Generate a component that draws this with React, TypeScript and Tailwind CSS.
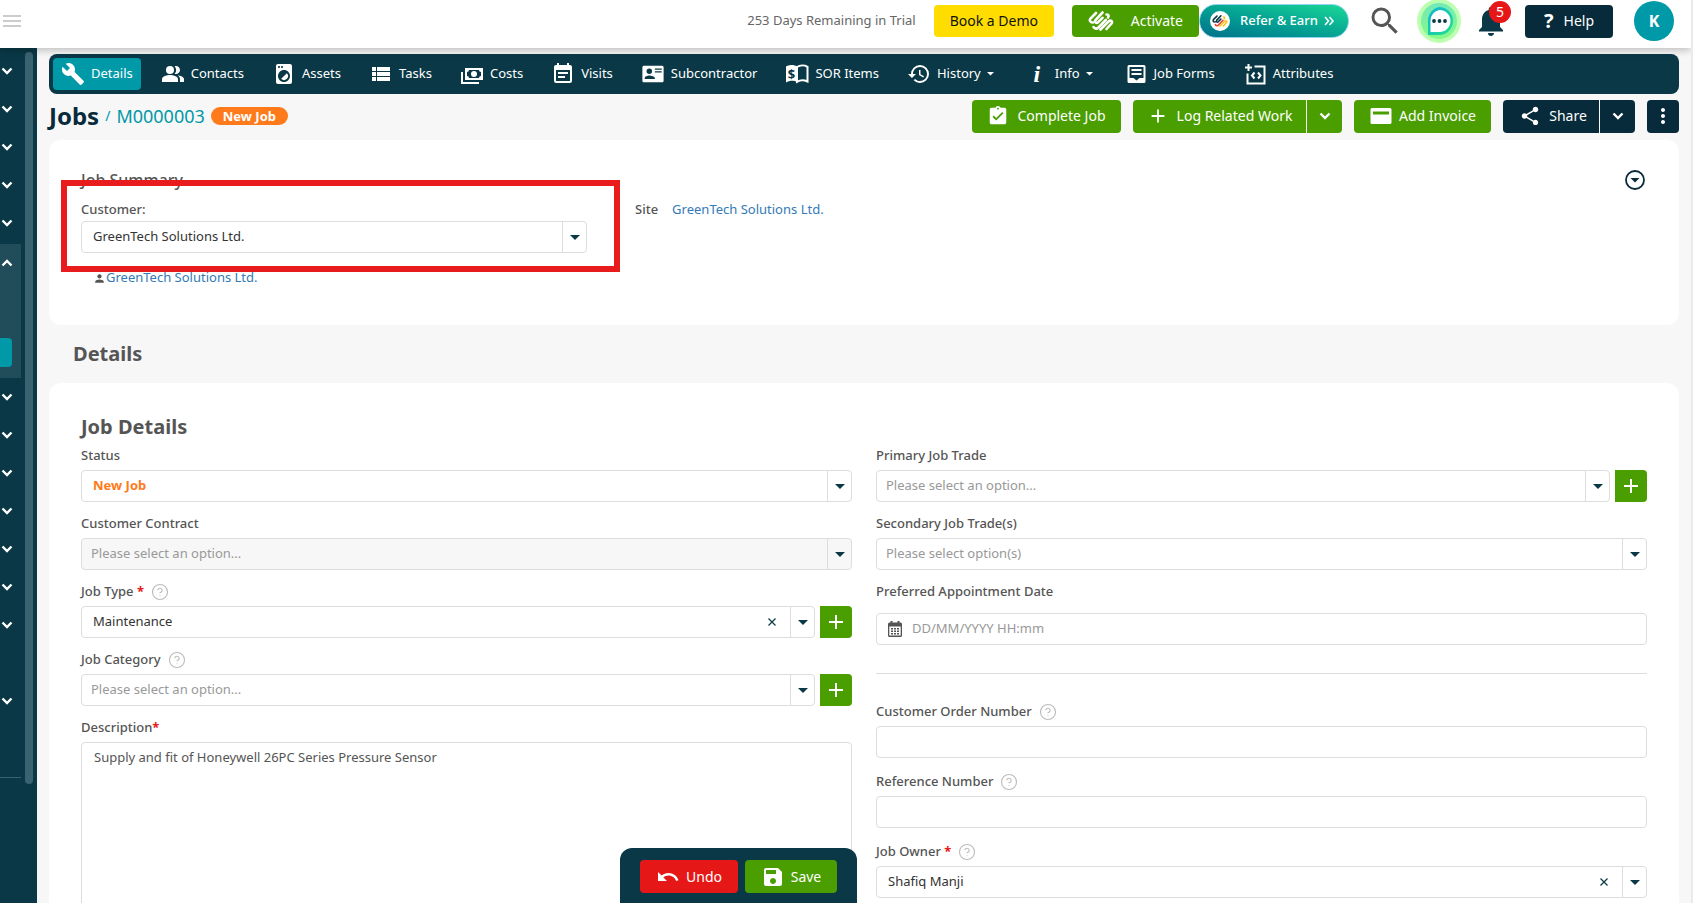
import { useState } from 'react';
import {
  MdAdd,
  MdAssignmentTurnedIn,
  MdBuild,
  MdEventNote,
  MdHistory,
  MdLocalLaundryService,
  MdMoreVert,
  MdNotifications,
  MdPeopleAlt,
  MdPerson,
  MdSave,
  MdSearch,
  MdShare,
  MdUndo,
  MdViewList,
} from 'react-icons/md';
import { FiHelpCircle } from 'react-icons/fi';

// ===========================================
// Icons
// ===========================================

const CashIcon = () => (
  <svg viewBox="0 0 24 24" className="h-6 w-6" fill="currentColor">
    <path d="M5,6H23V18H5V6M14,9A3,3 0 0,1 17,12A3,3 0 0,1 14,15A3,3 0 0,1 11,12A3,3 0 0,1 14,9M9,8A2,2 0 0,1 7,10V14A2,2 0 0,1 9,16H19A2,2 0 0,1 21,14V10A2,2 0 0,1 19,8H9M1,10H3V20H19V22H1V10Z" />
  </svg>
);

const IdCardIcon = () => (
  <svg viewBox="-1 0 26 24" className="h-6 w-6" fill="currentColor">
    <path d="M3,3H22C23,3 23.5,4 23.5,5V19C23.5,20 23,21 22,21H2C1,21 .5,20 .5,19V5C.5,4 1,3 2,3M14,6V7.3H21.5V6H14M14,9V10.3H21.5V9H14M8,13.5C6,13.5 3,14.5 3,16.5V17.5H14V16.5C14,14.5 10,13.5 8,13.5M8,6A3,3 0 0,0 5,9A3,3 0 0,0 8,12A3,3 0 0,0 11,9A3,3 0 0,0 8,6Z" fillRule="evenodd" />
  </svg>
);

const PriceBookIcon = () => (
  <svg viewBox="0 0 24 24" className="h-6 w-6">
    <path d="M1 4.5C4.500 2.500 9 2.500 12 4.500V20C9 18.300 4.500 18.300 1 20.500Z" fill="currentColor" />
    <path d="M12 5C15 3 19.500 3 22.500 4.800V19.500C19.500 18 15 18 12 19.800Z" fill="none" stroke="currentColor" strokeWidth="2" />
    <text x="6.500" y="16.500" textAnchor="middle" fontSize="13" fontWeight="700" fill="#0a3846">$</text>
  </svg>
);

const InfoIcon = () => (
  <span className="w-6 text-center font-['Liberation_Serif',serif] text-2xl leading-6 font-bold italic">i</span>
);

const FormIcon = () => (
  <svg viewBox="0 0 24 24" className="h-6 w-6">
    <path d="M5 3H20A1.500 1.500 0 0 1 21.500 4.500V19.500A1.500 1.500 0 0 1 20 21H5A1.500 1.500 0 0 1 3.500 19.500V4.500A1.500 1.500 0 0 1 5 3ZM5.500 5V16H9.500L12.500 18.500 15.500 16H19.500V5Z" fill="currentColor" fillRule="evenodd" />
    <path d="M7.500 8H17.500M7.500 12H17.500" stroke="currentColor" strokeWidth="2" />
  </svg>
);

const AttributeIcon = () => (
  <svg viewBox="0 0 24 24" className="h-6 w-6" fill="none" stroke="currentColor" strokeWidth="2">
    <path d="M5.500 2V9M2 5.500H9M11.500 4.500H21.500V21.500H4.500V11.500" />
    <path d="M11.500 10.500 9 13.500 11.500 16.500M15 10.500 17.500 13.500 15 16.500" />
  </svg>
);

const ChevronIcon = ({ up = false, className = 'w-3' }: { up?: boolean; className?: string }) => (
  <svg viewBox="0 0 12 8" className={className} fill="none" stroke="currentColor" strokeWidth="2.400">
    <path d={up ? 'M1.500 6.500 6 2 10.500 6.500' : 'M1.500 1.500 6 6 10.500 1.500'} />
  </svg>
);

const CaretIcon = ({ className = 'w-2.5' }: { className?: string }) => (
  <svg viewBox="0 0 10 5" className={className} fill="currentColor">
    <path d="M0 0H10L5 5Z" />
  </svg>
);

const LogoMark = ({ className, colors }: { className: string; colors: string[] }) => (
  <svg viewBox="0 0 26 20" className={className} fill="none" strokeWidth="2.600" strokeLinecap="round">
    <path d="M8 2 2.500 7.500C1 9.500 2.500 11.800 5 11.500" stroke={colors[0]} />
    <path d="M14.500 1.500 7.500 9C6 11 8.500 13 10.200 11.200L14.500 6.800" stroke={colors[0]} />
    <path d="M5.500 16C7 18.200 9 18 10.500 16.500L17.800 8.800" stroke={colors[1]} />
    <path d="M18.500 3.500C20.500 3.200 21.200 5 20 6.500" stroke={colors[2]} />
    <path d="M12.500 18.500 20.500 10.500C22.500 8.600 25 10 23.500 12.500L18.500 18" stroke={colors[2]} />
  </svg>
);

const ChatIcon = () => (
  <svg viewBox="0 0 44 44" className="h-11 w-11">
    <defs>
      <linearGradient id="chatRing" x1="0" y1="0" x2="1" y2="1">
        <stop offset="0" stopColor="#12b4d8" />
        <stop offset="1" stopColor="#1fe08a" />
      </linearGradient>
      <linearGradient id="chatHalo" x1="0" y1="0" x2="0" y2="1">
        <stop offset="0" stopColor="#74e8b8" />
        <stop offset="1" stopColor="#86fb86" />
      </linearGradient>
    </defs>
    <circle cx="22" cy="22" r="22" fill="#bdffb0" />
    <circle cx="22" cy="22" r="18" fill="url(#chatHalo)" />
    <path d="M22 8A14 14 0 1 1 22 36H11V22A14 14 0 0 1 22 8Z" fill="url(#chatRing)" />
    <path d="M22.500 11A11 11 0 1 1 22.500 33H13.500V22A11 11 0 0 1 22.500 11Z" fill="#fff" />
    <g fill="#0a3846">
      <circle cx="17" cy="22" r="1.900" />
      <circle cx="22.500" cy="22" r="1.900" />
      <circle cx="28" cy="22" r="1.900" />
    </g>
  </svg>
);

// ===========================================
// Header
// ===========================================

const Header = () => (
  <header className="relative z-20 flex h-12 shrink-0 items-center bg-white pr-[17px] pb-1.5 pl-[3px] shadow-[0_2px_8px_rgba(0,0,0,0.25)]">
    <button aria-label="Toggle menu" className="flex w-[18px] flex-col gap-[3px]">
      <span className="h-0.5 bg-[#ccc]" />
      <span className="h-0.5 bg-[#ccc]" />
      <span className="h-0.5 bg-[#ccc]" />
    </button>
    <span className="ml-auto text-[13px] text-[#666]">253 Days Remaining in Trial</span>
    <button className="ml-[18px] h-8 rounded bg-[#ffdd00] px-4 text-sm text-[#111]">Book a Demo</button>
    <button className="ml-[18px] flex h-8 w-[127px] items-center justify-between rounded bg-[#4a9e00] px-4 text-sm text-white">
      <LogoMark className="h-5 w-[26px]" colors={['#fff', '#fff', '#fff']} />
      Activate
    </button>
    <button className="flex h-[34px] w-[150px] items-center rounded-full border border-[#8fd3ee] bg-linear-to-tr from-[#03708a] to-[#1bd996] pl-2.5 text-[13px] font-medium text-white">
      <span className="mr-2.5 flex h-5 w-5 items-center justify-center rounded-full bg-white">
        <LogoMark className="h-3.5 w-4" colors={['#0a3846', '#e8403c', '#fcc419']} />
      </span>
      Refer &amp; Earn
      <svg viewBox="0 0 10 10" className="ml-1.5 w-2.5" fill="none" stroke="currentColor" strokeWidth="1.600">
        <path d="M1 1 4.500 5 1 9M5.500 1 9 5 5.500 9" />
      </svg>
    </button>
    <button aria-label="Search" className="ml-[18px] text-[#555]">
      <MdSearch className="h-9 w-9" />
    </button>
    <button aria-label="Chat" className="ml-3.5">
      <ChatIcon />
    </button>
    <button aria-label="Notifications" className="relative ml-3 text-[#0a3846]">
      <MdNotifications className="h-9 w-9" />
      <span className="absolute -top-0.5 -right-0.5 flex h-[22px] w-[22px] items-center justify-center rounded-full bg-[#e61717] text-sm text-white">
        5
      </span>
    </button>
    <button className="ml-4 flex h-[33px] w-[88px] items-center justify-center gap-2.5 rounded bg-[#072b3a] text-sm text-white">
      <span className="text-xl font-bold">?</span>
      Help
    </button>
    <button className="ml-[21px] h-10 w-10 rounded-full bg-[#0099a8] text-base font-bold text-white">K</button>
  </header>
);

// ===========================================
// Sidebar
// ===========================================

const SidebarRow = ({ up, blank }: { up?: boolean; blank?: boolean }) => (
  <button aria-label="Toggle section" className="flex h-[38px] w-full items-center pl-px">
    {!blank && <ChevronIcon up={up} />}
  </button>
);

const Sidebar = () => (
  <aside className="flex w-[37px] shrink-0 bg-[#0a3846] pt-1 text-white">
    <div className="w-[21px]">
      {[0, 1, 2, 3, 4].map((i) => (
        <SidebarRow key={i} />
      ))}
      <div className="mt-0.5 h-[134px] bg-[#214d5b]">
        <SidebarRow up />
        <div className="mt-14 h-[29px] w-3 rounded-r bg-[#0099a8]" />
      </div>
      {[0, 1, 2, 3, 4, 5, 6, 7, 8].map((i) => (
        <SidebarRow key={i} blank={i === 7} />
      ))}
      <div className="mt-[57px] border-t border-[#3a6371]" />
    </div>
    <div className="ml-1 h-[732px] w-2 rounded-full bg-[#3a6371]" />
  </aside>
);

// ===========================================
// Tabs
// ===========================================

const tabs = [
  { label: 'Details', icon: <MdBuild className="h-6 w-6" />, active: true },
  { label: 'Contacts', icon: <MdPeopleAlt className="h-6 w-6" /> },
  { label: 'Assets', icon: <MdLocalLaundryService className="h-6 w-6" /> },
  { label: 'Tasks', icon: <MdViewList className="h-6 w-6" /> },
  { label: 'Costs', icon: <CashIcon /> },
  { label: 'Visits', icon: <MdEventNote className="h-6 w-6" /> },
  { label: 'Subcontractor', icon: <IdCardIcon /> },
  { label: 'SOR Items', icon: <PriceBookIcon /> },
  { label: 'History', icon: <MdHistory className="h-6 w-6" />, menu: true },
  { label: 'Info', icon: <InfoIcon />, menu: true },
  { label: 'Job Forms', icon: <FormIcon /> },
  { label: 'Attributes', icon: <AttributeIcon /> },
];

const TabBar = () => (
  <nav className="flex h-10 items-center gap-3 rounded-lg bg-[#0a3846] px-1">
    {tabs.map((tab) => (
      <a
        key={tab.label}
        href="#"
        className={`flex h-8 items-center gap-1.5 rounded px-2 text-[13px] whitespace-nowrap text-white ${
          tab.active ? 'bg-[#0099a8]' : ''
        }`}
      >
        {tab.icon}
        {tab.label}
        {tab.menu && <CaretIcon className="mr-[3px] w-[7px]" />}
      </a>
    ))}
  </nav>
);

// ===========================================
// Title Row
// ===========================================

const TitleRow = () => (
  <div className="flex h-[46px] items-center pb-0.5">
    <h1 className="text-2xl font-bold text-[#072b3a]">Jobs</h1>
    <span className="ml-1.5 text-sm text-[#0099a8]">/</span>
    <a href="#" className="ml-1.5 text-lg text-[#0099a8]">M0000003</a>
    <span className="ml-1.5 rounded-full bg-[#ff7a1a] px-3 text-[13px] leading-[18px] font-bold text-white">New Job</span>
    <div className="ml-auto flex h-[33px] gap-3 text-sm text-white">
      <button className="flex w-[149px] items-center justify-center gap-2 rounded bg-[#4a9e00]">
        <MdAssignmentTurnedIn className="h-[22px] w-[22px]" />
        Complete Job
      </button>
      <div className="flex">
        <button className="flex w-[173px] items-center justify-center gap-2 rounded-l bg-[#4a9e00]">
          <MdAdd className="h-[22px] w-[22px]" />
          Log Related Work
        </button>
        <button aria-label="More related work" className="ml-px flex w-[35px] items-center justify-center rounded-r bg-[#4a9e00]">
          <ChevronIcon />
        </button>
      </div>
      <button className="flex w-[137px] items-center justify-center gap-1.5 rounded bg-[#4a9e00]">
        <svg viewBox="0 0 24 24" className="h-6 w-6" fill="currentColor">
          <path d="M3 4H21Q22.500 4 22.500 5.500V18.500Q22.500 20 21 20H3Q1.500 20 1.500 18.500V5.500Q1.500 4 3 4ZM4 7.500V10.500H20V7.500Z" fillRule="evenodd" />
        </svg>
        Add Invoice
      </button>
      <div className="flex">
        <button className="flex w-24 items-center justify-center gap-2 rounded-l bg-[#072b3a] pl-1">
          <MdShare className="h-[22px] w-[22px]" />
          Share
        </button>
        <button aria-label="More share options" className="ml-px flex w-[35px] items-center justify-center rounded-r bg-[#072b3a]">
          <ChevronIcon />
        </button>
      </div>
      <button aria-label="More actions" className="flex w-8 items-center justify-center rounded bg-[#072b3a]">
        <MdMoreVert className="h-6 w-6" />
      </button>
    </div>
  </div>
);

// ===========================================
// Form Fields
// ===========================================

interface LabelProps {
  htmlFor: string;
  text: string;
  required?: boolean;
  help?: boolean;
}

const FieldLabel = ({ htmlFor, text, required, help }: LabelProps) => (
  <div className="flex h-7 items-center text-[13px] font-medium text-[#555]">
    <label htmlFor={htmlFor}>
      {text}
      {required && <span className="font-bold text-[#e61717]">{text === 'Description' ? '*' : ' *'}</span>}
    </label>
    {help && <FiHelpCircle className="ml-[7px] h-[18px] w-[18px] stroke-[1.5] text-[#bbb]" />}
  </div>
);

interface SelectBoxProps {
  id: string;
  value: string;
  tone?: 'value' | 'placeholder' | 'status';
  disabled?: boolean;
  clearable?: boolean;
  addable?: boolean;
}

const toneClasses = {
  value: 'pl-[11px] text-[#333]',
  placeholder: 'pl-[9px] text-[#999]',
  status: 'pl-[11px] font-bold text-[#ff7a1a]',
};

const SelectBox = ({ id, value, tone = 'value', disabled, clearable, addable }: SelectBoxProps) => (
  <div className="flex h-8 gap-[5px]">
    <div className={`flex flex-1 items-stretch rounded border border-[#ddd] text-[#0a3846] ${disabled ? 'bg-[#f7f7f7]' : 'bg-white'}`}>
      <select id={id} disabled={disabled} className={`min-w-0 flex-1 appearance-none text-[13px] opacity-100 outline-none ${toneClasses[tone]}`}>
        <option>{value}</option>
      </select>
      {clearable && (
        <button aria-label="Clear" className="flex w-9 items-center justify-center">
          <svg viewBox="0 0 8 8" className="w-2" stroke="currentColor" strokeWidth="1.200">
            <path d="M.5 .5 7.500 7.500M7.500 .5 .5 7.500" />
          </svg>
        </button>
      )}
      <span className="flex w-6 items-center justify-center border-l border-[#ddd]">
        <CaretIcon />
      </span>
    </div>
    {addable && (
      <button aria-label="Add option" className="flex w-8 items-center justify-center rounded-r bg-[#4a9e00] text-white">
        <MdAdd className="h-6 w-6" />
      </button>
    )}
  </div>
);

const TextBox = ({ id }: { id: string }) => (
  <input id={id} type="text" className="block h-8 w-full rounded-sm border border-[#ddd] px-3 text-[13px] text-[#333] outline-none" />
);

// ===========================================
// Job Summary
// ===========================================

const JobSummary = () => (
  <section className="relative rounded-xl bg-white px-8 pt-7 pb-[37px]">
    <div className="flex h-6 items-center justify-between">
      <h2 className="text-base font-medium text-[#555]">Job Summary</h2>
      <button aria-label="Collapse summary" className="mr-0.5 text-[#072b3a]">
        <svg viewBox="0 0 20 20" className="h-5 w-5">
          <circle cx="10" cy="10" r="9" fill="none" stroke="currentColor" strokeWidth="1.800" />
          <path d="M5.500 8H14.500L10 12.500Z" fill="currentColor" />
        </svg>
      </button>
    </div>
    <div className="mt-[7px] flex gap-12 text-[13px]">
      <div className="w-[506px]">
        <div className="flex h-[22px] items-center font-medium text-[#555]">
          <label htmlFor="customer">Customer:</label>
        </div>
        <SelectBox id="customer" value="GreenTech Solutions Ltd." />
        <div className="mt-[15px] flex h-5 items-center pl-3">
          <MdPerson className="h-[13px] w-[13px] text-[#555]" />
          <a href="#" className="text-[#337ab7]">GreenTech Solutions Ltd.</a>
        </div>
      </div>
      <div className="flex h-[22px] items-center gap-3.5">
        <span className="font-medium text-[#555]">Site</span>
        <a href="#" className="text-[#337ab7]">GreenTech Solutions Ltd.</a>
      </div>
    </div>
    {/* Highlight around the customer field */}
    <div className="pointer-events-none absolute top-10 left-3 h-[92px] w-[559px] border-6 border-[#e81c1c]" />
  </section>
);

// ===========================================
// Job Details
// ===========================================

const JobDetails = () => {
  const [description, setDescription] = useState('Supply and fit of Honeywell 26PC Series Pressure Sensor');

  return (
    <section className="rounded-t-xl bg-white px-8 pt-[30px] pb-8">
      <h3 className="mb-px text-xl leading-7 font-bold text-[#555]">Job Details</h3>
      <div className="grid grid-cols-2 gap-6">
        <div className="flex flex-col gap-2">
          <div>
            <FieldLabel htmlFor="status" text="Status" />
            <SelectBox id="status" value="New Job" tone="status" />
          </div>
          <div>
            <FieldLabel htmlFor="contract" text="Customer Contract" />
            <SelectBox id="contract" value="Please select an option..." tone="placeholder" disabled />
          </div>
          <div>
            <FieldLabel htmlFor="type" text="Job Type" required help />
            <SelectBox id="type" value="Maintenance" clearable addable />
          </div>
          <div>
            <FieldLabel htmlFor="category" text="Job Category" help />
            <SelectBox id="category" value="Please select an option..." tone="placeholder" addable />
          </div>
          <div>
            <FieldLabel htmlFor="description" text="Description" required />
            <textarea
              id="description"
              value={description}
              onChange={(e) => setDescription(e.target.value)}
              className="block h-60 w-full resize-none rounded-sm border border-[#ddd] px-3 py-1 text-[13px] leading-5 text-[#555] outline-none"
            />
          </div>
        </div>

        <div className="flex flex-col gap-2">
          <div>
            <FieldLabel htmlFor="primary" text="Primary Job Trade" />
            <SelectBox id="primary" value="Please select an option..." tone="placeholder" addable />
          </div>
          <div>
            <FieldLabel htmlFor="secondary" text="Secondary Job Trade(s)" />
            <SelectBox id="secondary" value="Please select option(s)" tone="placeholder" />
          </div>
          <div className="border-b border-[#ddd] pb-7">
            <FieldLabel htmlFor="appointment" text="Preferred Appointment Date" />
            <div className="mt-[7px] flex h-8 items-center gap-2.5 rounded border border-[#ddd] pl-[11px]">
              <svg viewBox="0 0 14 16" className="h-4 w-3.5 text-[#555]" fill="currentColor">
                <path d="M2.500 0H4.500V1.500H9.500V0H11.500V1.500H12.500Q14 1.500 14 3V14.500Q14 16 12.500 16H1.500Q0 16 0 14.500V3Q0 1.500 1.500 1.500H2.500ZM1.300 5.500V14.500H12.700V5.500Z" fillRule="evenodd" />
                <path d="M3 7H5V8.500H3ZM6 7H8V8.500H6ZM9 7H11V8.500H9ZM3 9.500H5V11H3ZM6 9.500H8V11H6ZM9 9.500H11V11H9ZM3 12H5V13.500H3ZM6 12H8V13.500H6ZM9 12H11V13.500H9Z" />
              </svg>
              <input id="appointment" type="text" placeholder="DD/MM/YYYY HH:mm" className="flex-1 text-[13px] outline-none placeholder:text-[#999]" />
            </div>
          </div>
          <div className="mt-4 flex flex-col gap-2.5">
            <div>
              <FieldLabel htmlFor="order" text="Customer Order Number" help />
              <TextBox id="order" />
            </div>
            <div>
              <FieldLabel htmlFor="reference" text="Reference Number" help />
              <TextBox id="reference" />
            </div>
            <div>
              <FieldLabel htmlFor="owner" text="Job Owner" required help />
              <SelectBox id="owner" value="Shafiq Manji" clearable />
            </div>
          </div>
        </div>
      </div>
    </section>
  );
};

// ===========================================
// App
// ===========================================

export default function App() {
  return (
    <div className="flex h-screen flex-col overflow-hidden border-r-2 border-[#eaeaea] bg-[#f7f7f7] font-['Noto_Sans',sans-serif]">
      <Header />
      <div className="flex min-h-0 flex-1">
        <Sidebar />
        <main className="min-w-0 flex-1 overflow-hidden px-3 pt-1.5">
          <TabBar />
          <TitleRow />
          <JobSummary />
          <h2 className="flex h-[58px] items-center pl-6 text-xl font-bold text-[#555]">Details</h2>
          <JobDetails />
        </main>
      </div>

      {/* Floating save bar */}
      <div className="fixed bottom-0 left-[620px] z-10 flex h-[55px] gap-[7px] rounded-t-xl bg-[#0a3846] px-5 pt-3 text-sm text-white">
        <button className="flex h-[33px] w-[98px] items-center justify-center gap-1.5 rounded bg-[#e61717]">
          <MdUndo className="h-6 w-6" />
          Undo
        </button>
        <button className="flex h-[33px] w-[92px] items-center justify-center gap-1.5 rounded bg-[#4a9e00]">
          <MdSave className="h-6 w-6" />
          Save
        </button>
      </div>
    </div>
  );
}
